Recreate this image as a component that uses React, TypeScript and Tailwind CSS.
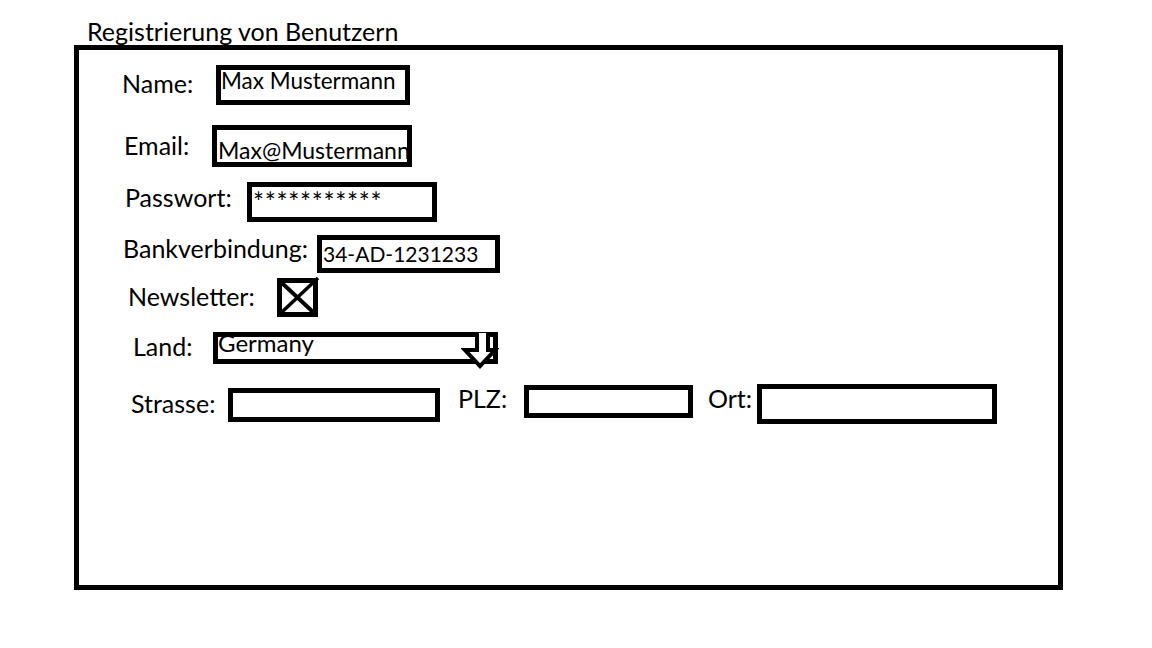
import React from "react";

const font = { fontFamily: "Lato, 'Open Sans', sans-serif" };

function Label({ text, width, top }: { text: string; width: string; top: string }) {
	return <div className={`shrink-0 text-[25px] leading-none text-black ${width} ${top}`}>{text}</div>;
}

function DropArrow() {
	return (
		<svg className="absolute top-[-4px] left-[243px]" width="38" height="37" viewBox="0 0 38 37">
			<polyline
				points="16,0 16,17 4,17 19,33 34,17 27,17 27,0"
				fill="white"
				stroke="black"
				strokeWidth="4"
				strokeLinejoin="miter"
			/>
		</svg>
	);
}

export default function App() {
	return (
		<div className="h-[648px] w-full bg-white pt-[19px] text-black" style={font}>
			<h1 className="pl-[87px] text-[25px] leading-none font-normal">Registrierung von Benutzern</h1>

			<div className="mt-[1px] ml-[74px] h-[545px] w-[989px] border-[5px] border-black">
				<div className="flex flex-col pt-[15px]">
					{/* Name */}
					<div className="flex h-[60px] items-start pl-[43px]">
						<Label text="Name:" width="w-[94px]" top="mt-[6px]" />
						<div className="h-[40px] w-[194px] border-[5px] border-black text-[22.5px] leading-none whitespace-nowrap">
							Max Mustermann
						</div>
					</div>

					{/* Email */}
					<div className="flex h-[57px] items-start pl-[45px]">
						<Label text="Email:" width="w-[88px]" top="mt-[8px]" />
						<div className="h-[42px] w-[200px] overflow-hidden border-[5px] border-black pt-[9px] pl-[1px] text-[23px] leading-none whitespace-nowrap">
							Max@Mustermann
						</div>
					</div>

					{/* Passwort */}
					<div className="flex h-[53px] items-start pl-[46px]">
						<Label text="Passwort:" width="w-[122px]" top="mt-[3px]" />
						<div className="h-[40px] w-[190px] border-[5px] border-black pt-[2px] pl-[1px] text-[26px] leading-none tracking-[0.7px] whitespace-nowrap">
							***********
						</div>
					</div>

					{/* Bankverbindung */}
					<div className="flex h-[42px] items-start pl-[44px]">
						<Label text="Bankverbindung:" width="w-[194px]" top="mt-[1px]" />
						<div className="h-[38px] w-[183px] border-[5px] border-black pt-[3px] pl-[1px] text-[21px] leading-none whitespace-nowrap">
							34-AD-1231233
						</div>
					</div>

					{/* Newsletter */}
					<div className="flex h-[54px] items-start pl-[49px]">
						<Label text="Newsletter:" width="w-[149px]" top="mt-[7px]" />
						<div className="mt-[1px] h-[39px] w-[41px] border-[5px] border-black">
							<svg width="31" height="29" viewBox="0 0 31 29" className="block overflow-visible">
								<line x1="0" y1="0" x2="31" y2="29" stroke="black" strokeWidth="4" />
								<line x1="36" y1="-5" x2="0" y2="29" stroke="black" strokeWidth="3.5" />
							</svg>
						</div>
					</div>

					{/* Land */}
					<div className="flex h-[53px] items-start pl-[54px]">
						<Label text="Land:" width="w-[80px]" top="mt-[3px]" />
						<div className="relative mt-[1px] h-[32px] w-[285px] border-[5px] border-black text-[24px] leading-none whitespace-nowrap">
							<div className="-mt-[6px]">Germany</div>
							<DropArrow />
						</div>
					</div>

					{/* Strasse / PLZ / Ort */}
					<div className="flex items-start pl-[52px]">
						<Label text="Strasse:" width="w-[97px]" top="mt-[7px]" />
						<div className="mt-[4px] h-[34px] w-[212px] shrink-0 border-[5px] border-black" />
						<div className="ml-[18px] shrink-0">
							<Label text="PLZ:" width="w-[66px]" top="mt-[2px]" />
						</div>
						<div className="mt-[1px] h-[33px] w-[169px] shrink-0 border-[5px] border-black" />
						<div className="ml-[15px] shrink-0">
							<Label text="Ort:" width="w-[49px]" top="mt-[2px]" />
						</div>
						<div className="h-[40px] w-[240px] shrink-0 border-[5px] border-black" />
					</div>
				</div>
			</div>
		</div>
	);
}
